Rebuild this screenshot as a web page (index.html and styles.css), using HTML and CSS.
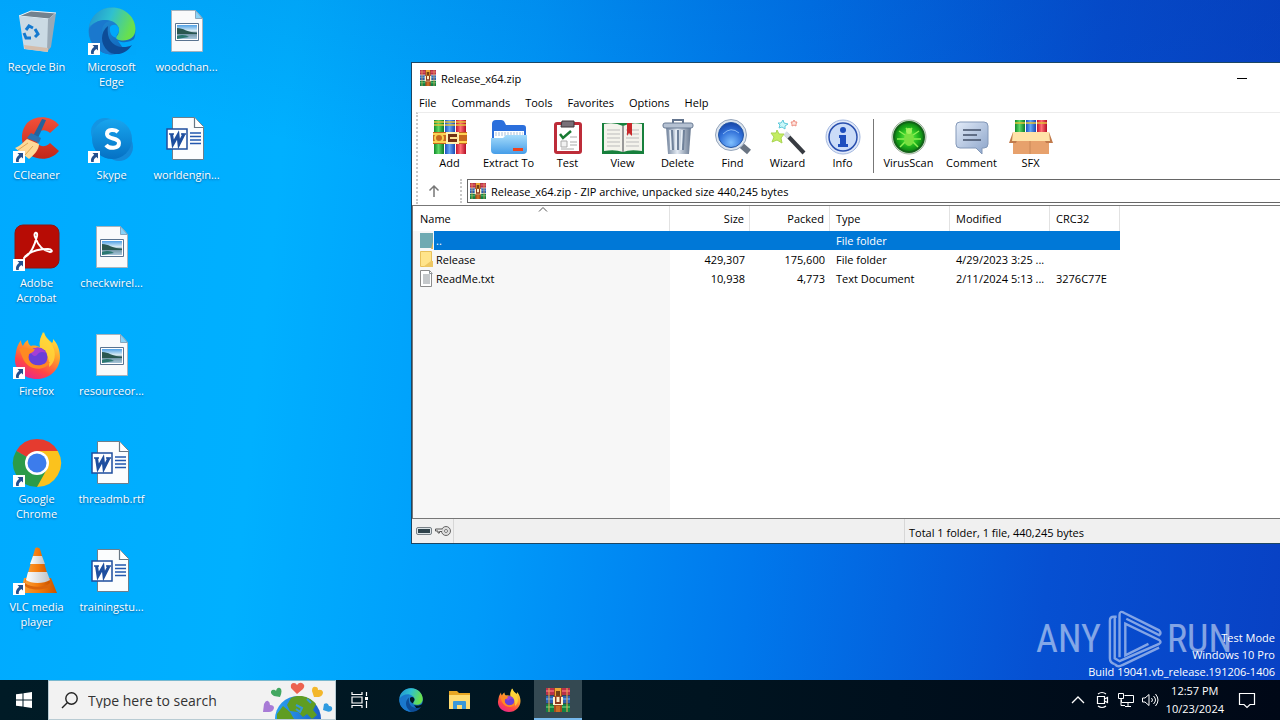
FILE: index.html
```html
<!DOCTYPE html>
<html lang="en">
<head>
<meta charset="utf-8">
<title>Desktop</title>
<link rel="stylesheet" href="styles.css">
</head>
<body>
<svg class="defs" aria-hidden="true">
  <defs>
    <linearGradient id="edgeTop" x1="0" y1="0" x2="1" y2="0.3"><stop offset="0" stop-color="#1f8fd0"/><stop offset=".5" stop-color="#2fc0d0"/><stop offset="1" stop-color="#68e04e"/></linearGradient>
    <linearGradient id="edgeLeft" x1="0" y1="0" x2=".6" y2="1"><stop offset="0" stop-color="#2596dc"/><stop offset="1" stop-color="#1168bd"/></linearGradient>
    <linearGradient id="foxG" x1=".8" y1="0" x2=".3" y2="1"><stop offset="0" stop-color="#fff044"/><stop offset=".4" stop-color="#ffa02c"/><stop offset=".75" stop-color="#ff4646"/><stop offset="1" stop-color="#e8268c"/></linearGradient>
    <linearGradient id="coneG"><stop offset="0" stop-color="#f9a13a"/><stop offset=".5" stop-color="#f57c0c"/><stop offset="1" stop-color="#c95400"/></linearGradient>
    <linearGradient id="whiteG"><stop offset="0" stop-color="#fff"/><stop offset="1" stop-color="#bfc3c6"/></linearGradient>
    <linearGradient id="skyG" x1="0" y1="0" x2="0" y2="1"><stop offset="0" stop-color="#18a5ee"/><stop offset="1" stop-color="#0571c4"/></linearGradient>
    <linearGradient id="redG" x1="0" y1="0" x2="0" y2="1"><stop offset="0" stop-color="#f2503a"/><stop offset="1" stop-color="#c02618"/></linearGradient>
    <linearGradient id="bG"><stop offset="0" stop-color="#1d4fc0"/><stop offset=".45" stop-color="#63a5f5"/><stop offset="1" stop-color="#1a48b0"/></linearGradient>
    <linearGradient id="gG"><stop offset="0" stop-color="#0f8a2a"/><stop offset=".45" stop-color="#5ed868"/><stop offset="1" stop-color="#0b7a25"/></linearGradient>
    <linearGradient id="rG"><stop offset="0" stop-color="#c4122c"/><stop offset=".45" stop-color="#ff6f74"/><stop offset="1" stop-color="#b30d25"/></linearGradient>
    <linearGradient id="foldG" x1="0" y1="0" x2="0" y2="1"><stop offset="0" stop-color="#a5dcfb"/><stop offset="1" stop-color="#459de8"/></linearGradient>
    <linearGradient id="metalG"><stop offset="0" stop-color="#71829b"/><stop offset=".45" stop-color="#e2e9f2"/><stop offset="1" stop-color="#66778f"/></linearGradient>
    <radialGradient id="lensG" cx=".5" cy=".8" r=".8"><stop offset="0" stop-color="#7fc0ff"/><stop offset=".6" stop-color="#2f6fd8"/><stop offset="1" stop-color="#1745a8"/></radialGradient>
    <radialGradient id="virG"><stop offset="0" stop-color="#6bff4a"/><stop offset=".6" stop-color="#22b81d"/><stop offset="1" stop-color="#0a7d12"/></radialGradient>
    <linearGradient id="noteG" x1="0" y1="0" x2="1" y2="1"><stop offset="0" stop-color="#e2ebf8"/><stop offset="1" stop-color="#8aa3c9"/></linearGradient>
    <linearGradient id="photoG" x1="0" y1="0" x2="0" y2="1"><stop offset="0" stop-color="#4fa0e6"/><stop offset=".45" stop-color="#e4f2f6"/><stop offset=".5" stop-color="#5d8291"/><stop offset="1" stop-color="#a8c7dc"/></linearGradient>
    <linearGradient id="earthG"><stop offset="0" stop-color="#2aa2f2"/><stop offset="1" stop-color="#1b5fc9"/></linearGradient>

    <symbol id="shortcut" viewBox="0 0 12 12"><path d="M0 0h12v12H0z" fill="#fff"/><path d="M4.500 2H10v5.500L8.300 5.900C6 7.500 5.600 8.800 5.800 11H3.200C2.500 8.200 3.300 6 6.200 3.800z" fill="#24508e"/></symbol>

    <symbol id="edge" viewBox="0 0 48 48">
      <circle cx="24" cy="24" r="23.500" fill="url(#edgeLeft)"/>
      <path class="edge-cut" d="M30 34c8 3 14 0 19-4v18H40z"/>
      <path d="M1 20C3 8 13 .5 24 .5 38 .5 47.500 11 47.500 22c0 8-6 11.500-12 11.500-5 0-8-1.500-7.500-3.500 2-2 3-4 3-7 0-6-7-10-13-10C9 13 4 17 1 20z" fill="url(#edgeTop)"/>
      <path d="M14 24c0-5 3-9 8-10-9-3-17 2-21 8 0 15 11 25.500 23 25.500C17 43 13 34 14 24z" fill="#1a78cd"/>
      <path d="M20 19c-8 6-8 18 0 25 8 6 18 3 24-6-9 5-27 2-24-19z" fill="#0d4c98"/>
      <path class="edge-cut" d="M22 20c3-4 9-2 9 3 0 4-4 5-2 8-5-1-8-5-7-11z"/>
    </symbol>
    <symbol id="firefox" viewBox="0 0 48 48">
      <path d="M3 21C4 15 6 12 8 9c0 3 1 5 2 6 1-3 3-5 5-6 0 3 1 5 3 6 3-1 6 0 9 1-1-6 1-11 4-15 1 5 5 8 8 11 1-1 1-2 1-4 5 5 7 12 7 18 0 12-10 22-23 22S1 39 2 27z" fill="url(#foxG)"/>
      <path d="M30 1c1 6 6 8 9 13 5 8 3 18-3 22 1-8-3-16-9-20-1-6 1-11 3-15z" fill="#ffd83a" opacity=".8"/>
      <circle cx="25" cy="26" r="9.500" fill="#6a3fd8"/><path d="M17 20c4-5 13-4 16 2-4-2-7-1-9 2-2 2-5 1-7-4z" fill="#a33fd5"/>
      <path d="M6 18c5-3 10 0 16 0-1 3-4 4-6 5-3 5 3 13 12 11 4-1 6-3 9-3-3 7-14 9-21 4C10 31 9 24 6 18z" fill="#ff8a22"/>
    </symbol>
    <symbol id="image-file" viewBox="0 0 48 48">
      <path d="M8.500 3.500h24l7 8v33h-31z" fill="#f9fafb" stroke="#a7b3bd"/><path d="M32.500 3.500v8h7z" fill="#8ad2f6" stroke="#86a7be"/>
      <path d="M12.500 16.500h23v17h-23z" fill="#fff" stroke="#597390"/><path d="M14 18h20v14H14z" fill="url(#photoG)"/><path d="M14 21c7 0 9 4 20 5v1H14z" fill="#2a5750"/><path d="M14 29c6-2 9-1 12 1l-12 2z" fill="#2b7770"/>
    </symbol>
    <symbol id="word-file" viewBox="0 0 48 48">
      <path d="M9.500 2.500h22l9 9v33h-31z" fill="#fbfdfe" stroke="#6d7f8c"/><path d="M31.500 2.500v10h9" fill="#fff" stroke="#687784" stroke-width="1.200"/>
      <path d="M27 18h11M27 21.500h11M27 25h11M27 28.500h11" stroke="#2458ae" stroke-width="1.300"/>
      <path d="M4 14h20v20H4z" fill="#fff" stroke="#1e4e9f" stroke-width="1.500"/><path d="M8.500 19l1.500 10 5-9 1 9 5-10" fill="none" stroke="#1e4e9f" stroke-width="3"/><path d="M6 19h5M18 19h5" stroke="#1e4e9f" stroke-width="1.500"/>
    </symbol>
    <symbol id="winrar" viewBox="0 0 24 24">
      <path d="M0 0h24v7H0z" fill="#b8314c"/><path d="M0 2h24v2H0z" fill="#e25b6c"/><path d="M0 8h24v7H0z" fill="#2d5faf"/><path d="M0 10h24v2H0z" fill="#4e90de"/><path d="M0 16h24v8H0z" fill="#128043"/><path d="M0 18h24v2H0z" fill="#42b264"/>
      <path d="M2 0h2v24H2zM20 0h2v24h-2z" fill="#e3a64d" opacity=".55"/><path d="M8 0h8v24H8z" fill="#a34b21"/><path d="M9 0h6v8H9z" fill="#efa733"/><path d="M10 3h4v5h-4z" fill="#744018"/>
      <path d="M7 9h10v8H7z" fill="#fff0c8"/><path d="M9 9h1.500v5h3V9H15v7H9z" fill="#8b381e"/><path d="M10 18h4v6h-4z" fill="#cc6b22"/>
    </symbol>
    <symbol id="folder-file" viewBox="0 0 14 17"><path d="M.5.500h11v15H.5z" fill="#ffe48b" stroke="#e8c05a"/><path d="M11 10h2v6H3z" fill="#edc763"/></symbol>
  </defs>
</svg>

<main class="desktop">
  <ul class="icons">
    <li class="icon"><svg viewBox="0 0 48 48"><path d="M6 9l12-5 25 2-7 6z" fill="#73828e" stroke="#f0f5f8"/><path d="M6 9l29 3v33l-24-3z" fill="#cbdae4"/><path d="M35 12l8-6-5 34-4 5z" fill="#9aa9b6"/><path d="M11 38l24 3v4l-23-3z" fill="#d4bdac"/><path d="M13 23l3-4 4 2M22 22l3 5-3 3M18 31h-5l-2-5" fill="none" stroke="#1479cf" stroke-width="3"/></svg><span>Recycle Bin</span></li>
    <li class="icon"><svg viewBox="0 0 48 48"><path d="M46 10C38 0 22 0 14 8 6 18 8 32 17 40c9 6 22 5 29-4l-9-8c-5 5-12 4-13-2-3-8 6-15 13-8z" fill="url(#redG)"/><path d="M29 4l4 1-8 18-5-2z" fill="#23639e"/><path d="M18 18l10 5-2 5-12-5z" fill="#2b73b2"/><path d="M2 33c6-2 9-7 12-9l12 5c0 6-5 11-10 15z" fill="#ffd997"/><path d="M5 35l10-7M12 40l8-9" stroke="#e0a756"/></svg><svg class="arrow"><use href="#shortcut"/></svg><span>CCleaner</span></li>
    <li class="icon"><svg viewBox="0 0 48 48"><rect x="2" y="2" width="44" height="43" rx="8" fill="#b70c05" stroke="#8e1410"/><path d="M12 34c6-3 10-13 12-21 1-5-4-4-2 1 3 8 8 14 15 15 3 0 2-3-2-3-8 0-14 1-20 5-4 3-5 6-3 3z" fill="none" stroke="#fff" stroke-width="2"/></svg><svg class="arrow"><use href="#shortcut"/></svg><span>Adobe Acrobat</span></li>
    <li class="icon"><svg><use href="#firefox"/></svg><svg class="arrow"><use href="#shortcut"/></svg><span>Firefox</span></li>
    <li class="icon"><svg viewBox="0 0 48 48"><path d="M24 24 3.200 12a24 24 0 0 1 41.600 0z" fill="#e53b2f"/><path d="M24 24V12h20.800A24 24 0 0 1 24 48z" fill="#fbc21d"/><path d="M24 24l10 6-10 18A24 24 0 0 1 3.200 12z" fill="#2b9b49"/><circle cx="24" cy="24" r="12" fill="#fff"/><circle cx="24" cy="24" r="9.500" fill="#3c7cec"/></svg><svg class="arrow"><use href="#shortcut"/></svg><span>Google Chrome</span></li>
    <li class="icon"><svg viewBox="0 0 48 48"><path d="M11 31h27l6 15H8z" fill="url(#coneG)"/><path d="M11 38c5 6 22 6 27 0l-2-7H13z" fill="#db650b"/><path d="M22 2c0-2 4-2 5 0l10 34c-6 5-19 5-25 0z" fill="url(#coneG)"/><path d="M20 9h9l3 8H17z" fill="url(#whiteG)"/><path d="M15 25h19l3 8c-6 4-19 4-24 0z" fill="url(#whiteG)"/></svg><svg class="arrow"><use href="#shortcut"/></svg><span>VLC media player</span></li>
    <li class="icon"><svg><use href="#edge"/></svg><svg class="arrow"><use href="#shortcut"/></svg><span>Microsoft Edge</span></li>
    <li class="icon"><svg viewBox="0 0 48 48"><circle cx="17" cy="17" r="14" fill="#1495e3"/><circle cx="31" cy="32" r="14" fill="#1489d9"/><circle cx="24" cy="24" r="20" fill="url(#skyG)"/><path d="M30 17c-3-3-11-3-11 2 0 6 12 3 12 9 0 6-10 6-13 2" fill="none" stroke="#fff" stroke-width="4"/></svg><svg class="arrow"><use href="#shortcut"/></svg><span>Skype</span></li>
    <li class="icon"><svg><use href="#image-file"/></svg><span>checkwirel...</span></li>
    <li class="icon"><svg><use href="#image-file"/></svg><span>resourceor...</span></li>
    <li class="icon"><svg><use href="#word-file"/></svg><span>threadmb.rtf</span></li>
    <li class="icon"><svg><use href="#word-file"/></svg><span>trainingstu...</span></li>
    <li class="icon"><svg><use href="#image-file"/></svg><span>woodchan...</span></li>
    <li class="icon"><svg><use href="#word-file"/></svg><span>worldengin...</span></li>
  </ul>

  <div class="brand"><span>ANY</span>
    <svg viewBox="0 0 56 62"><g fill="none" stroke="#fff" stroke-width="2.500"><path d="M10 8H7Q3 8 3 12v39q0 5 5 6"/><path d="M8 8v43l5 3 41-18q3-2 0-4L19 15v33l24-12"/><path d="M8 57q3 4 8 1l38-18M13 50V6q0-5 5-2l36 18q3 3 0 5L20 10"/></g></svg>
    <span>RUN</span></div>
  <div class="build"><p>Test Mode</p><p>Windows 10 Pro</p><p>Build 19041.vb_release.191206-1406</p></div>

  <section class="window">
    <header class="titlebar"><svg><use href="#winrar"/></svg><h1>Release_x64.zip</h1><button class="minimize" aria-label="Minimize"></button></header>
    <nav class="menu"><button>File</button><button>Commands</button><button>Tools</button><button>Favorites</button><button>Options</button><button>Help</button></nav>
    <div class="bars">
      <div class="toolbar">
        <button><svg viewBox="0 0 36 36"><path d="M2 1h10v34H2z" fill="url(#gG)"/><path d="M13 1h10v34H13z" fill="url(#bG)"/><path d="M24 1h10v34H24z" fill="url(#rG)"/><path d="M2 3h10M13 3h10M24 3h10M2 6h10M13 6h10M24 6h10" stroke="#e3c13a" stroke-width="1.500"/><path d="M1 13h34v12H1z" fill="#c8691d"/><path d="M1 14h34v2H1zM1 22h34v2H1z" fill="#ffd353"/><circle cx="7" cy="19" r="4" fill="none" stroke="#f6d252" stroke-width="2"/><path d="M15 14h11v10H15z" fill="#743214" stroke="#fff0b0" stroke-width="2"/><path d="M18 19h8" stroke="#ffe495" stroke-width="2"/></svg>Add</button>
        <button class="medium"><svg viewBox="0 0 36 36"><path d="M1 5q0-4 4-4h5q3 0 4 3l1 2h17q3 0 3 3v18H1z" fill="#2b6fdc"/><path d="M3 12h30v12H3z" fill="#fff"/><path d="M4 14h28M4 16h28" stroke="#a8bfda" stroke-dasharray="2 1"/><path d="M0 19h12l3-3h21v15q0 4-4 4H4q-4 0-4-4z" fill="url(#foldG)"/><path d="M22 29h10v3H22z" fill="#ee421e"/></svg>Extract To</button>
        <button><svg viewBox="0 0 36 36"><rect x="4" y="3" width="28" height="32" rx="3" fill="#bd2c39"/><path d="M7 6h22v26H7z" fill="#fff"/><path d="M12 2h12v6H11z" fill="#787078" stroke="#3c353b"/><path d="M10 15l3 4 8-7" fill="none" stroke="#187a32" stroke-width="2.500"/><path d="M11 22h6v6h-6z" fill="#f2f2f2" stroke="#aaa"/><path d="M20 18h7M20 23h7M20 26h7M11 30h13" stroke="#aaa"/></svg>Test</button>
        <button><svg class="wide-icon" viewBox="0 0 44 36"><path d="M1 4h42v31H1z" fill="#17803c"/><path d="M3 5q11-2 19 2 8-4 19-2v27q-12-2-19 1-8-3-19-1z" fill="#f4f3ec"/><path d="M22 7v26" stroke="#999" stroke-width="2"/><path d="M6 11h13M6 15h13M6 19h13M6 23h13M6 27h13M25 11h13M25 15h13M25 19h13M25 23h13M25 27h13" stroke="#bbb"/><path d="M26 4h5v13l-3-3-2 3z" fill="#c8292b"/></svg>View</button>
        <button><svg viewBox="0 0 36 36"><path d="M13 4V1h10v3" fill="none" stroke="#64758e" stroke-width="2"/><path d="M6 8h25l-2 27H8z" fill="url(#metalG)"/><path d="M12 11l1 20M18 11v20M24 11l-1 20" stroke="#6f819a" stroke-width="2"/><path d="M10 11l1 20M16 11v20M22 11l-1 20" stroke="#e9f0f7" stroke-width="1.500"/><rect x="3" y="4" width="30" height="5" rx="2" fill="#b5c1d2" stroke="#687a93"/></svg>Delete</button>
        <button><svg viewBox="0 0 36 36"><path d="M26 26l8 7" stroke="#6a7482" stroke-width="6"/><circle cx="16" cy="16" r="15.500" fill="#dce5ef" stroke="#97a6bb"/><circle cx="16" cy="16" r="12.500" fill="url(#lensG)" stroke="#2255a5"/><path d="M8 15q8-8 16-1" fill="none" stroke="#8bbaf5"/></svg>Find</button>
        <button><svg viewBox="0 0 36 36"><path d="M16 15l18 19" stroke="#373b41" stroke-width="4"/><path d="M15 14l4 4" stroke="#d5dce5" stroke-width="5"/><path d="M7 11l2 4 5 0-3 4 1 5-5-3-5 2 2-5-3-4 5 0z" fill="#c4ed62" stroke="#a9d553"/><path d="M13 1l1 3 4 1-3 2v3l-3-2-3 1 1-3-2-2h3z" fill="#caf8fa" stroke="#5ec9da"/><path d="M24 1l1 2h2l-1 2v2l-2-1-2 1v-2l-1-2h2z" fill="#ffe5df" stroke="#ed8f82"/></svg>Wizard</button>
        <button><svg viewBox="0 0 36 36"><circle cx="18" cy="18" r="17" fill="#e2eafa" stroke="#a2b7df"/><circle cx="18" cy="18" r="14" fill="#cbdcf8" stroke="#294fae" stroke-width="1.500"/><circle cx="18" cy="11" r="3" fill="#1f4fbe"/><path d="M14 16h7v9h2v3H13v-3h2v-6h-1z" fill="#1f4fbe"/></svg>Info</button>
        <i class="separator"></i>
        <button class="medium"><svg viewBox="0 0 36 36"><circle cx="18" cy="18" r="17" fill="#e5eee4" stroke="#9eaf9c"/><circle cx="18" cy="18" r="15" fill="url(#virG)" stroke="#146319" stroke-width="2"/><path d="M15 9l3 4 3-4M8 12l6 4M28 12l-6 4M6 20h8M30 20h-8M9 28l5-5M27 28l-5-5" fill="none" stroke="#8cf052" stroke-width="1.500"/><ellipse cx="18" cy="20" rx="5" ry="7" fill="#78e040"/><circle cx="18" cy="12" r="3" fill="#a0f25c"/></svg>VirusScan</button>
        <button class="medium"><svg viewBox="0 0 36 36"><path d="M6 3h24q4 0 4 4v18q0 4-4 4h-2v6l-6-6H6q-4 0-4-4V7q0-4 4-4z" fill="url(#noteG)" stroke="#8398b8"/><path d="M9 11h18M9 16h14M9 21h18" stroke="#435068" stroke-width="1.500"/></svg>Comment</button>
        <button><svg class="wide-icon" viewBox="0 0 44 36"><path d="M6 1h10v16H6z" fill="url(#gG)"/><path d="M17 1h10v16H17z" fill="url(#bG)"/><path d="M28 1h10v16H28z" fill="url(#rG)"/><path d="M6 4h10M17 4h10M28 4h10" stroke="#e3c13a" stroke-width="1.500"/><path d="M4 14h36v21H4z" fill="#e7a16c"/><path d="M4 13l-4 11h7l3-8M40 13l4 11h-7l-4-8" fill="#c17b4c"/><path d="M4 13h36l1 9H3z" fill="#ffe2a8"/><path d="M21 22v13" stroke="#ca8756"/></svg>SFX</button>
      </div>
      <div class="addressbar"><button class="up" aria-label="Up one level"><svg viewBox="0 0 12 12"><path d="M6 12V1M1.500 5.500 6 1l4.500 4.500" fill="none" stroke="#777" stroke-width="1.500"/></svg></button><label class="address"><svg><use href="#winrar"/></svg><input aria-label="Archive path" readonly value="Release_x64.zip - ZIP archive, unpacked size 440,245 bytes"></label></div>
    </div>
    <div class="list">
      <table>
        <colgroup><col class="c-name"><col class="c-num"><col class="c-num"><col class="c-type"><col class="c-date"><col class="c-crc"></colgroup>
        <thead><tr><th>Name<svg class="sort" viewBox="0 0 8 5"><path d="M0 4.500 4 .5l4 4" fill="none" stroke="#555"/></svg></th><th class="num">Size</th><th class="num">Packed</th><th>Type</th><th>Modified</th><th>CRC32</th></tr></thead>
        <tbody>
          <tr class="selected"><td><span class="file"><svg viewBox="0 0 14 17"><path d="M0 1h13v15H0z" fill="#6faab2"/><path d="M13 10v7h-2z" fill="#deb65c"/></svg><b>..</b></span></td><td></td><td></td><td>File folder</td><td></td><td></td></tr>
          <tr><td><span class="file"><svg><use href="#folder-file"/></svg><b>Release</b></span></td><td class="num">429,307</td><td class="num">175,600</td><td>File folder</td><td>4/29/2023 3:25 ...</td><td></td></tr>
          <tr><td><span class="file"><svg viewBox="0 0 14 17"><path d="M.5.500h9l2 2v14H.5z" fill="#fff" stroke="#8b8b8b"/><path d="M9.500.500v3h3M3 5h7M3 7h7M3 9h7M3 11h7M3 13h7" fill="none" stroke="#8b9297"/></svg><b>ReadMe.txt</b></span></td><td class="num">10,938</td><td class="num">4,773</td><td>Text Document</td><td>2/11/2024 5:13 ...</td><td>3276C77E</td></tr>
        </tbody>
      </table>
    </div>
    <footer class="status"><div class="status-icons"><svg viewBox="0 0 16 8"><rect x=".5" y=".5" width="15" height="7" rx="1.500" fill="#dce3e6" stroke="#778087"/><path d="M2 2h12v4H2z" fill="#30434c"/></svg><svg viewBox="0 0 16 10"><circle cx="11" cy="5" r="4.500" fill="#ddd" stroke="#666"/><circle cx="11" cy="5" r="1.500" fill="#fff" stroke="#777"/><path d="M7 3H.5v2H3v2h1.500V5.500H7" fill="#eee" stroke="#555"/></svg></div><div class="status-main"></div><div class="status-total">Total 1 folder, 1 file, 440,245 bytes</div></footer>
  </section>
</main>

<footer class="taskbar">
  <button class="start" aria-label="Start"><svg viewBox="0 0 16 16"><path d="M0 2.300 6.500 1.400v6.100H0zM7.500 1.200 16 0v7.500H7.500zM0 8.500h6.500v6.100L0 13.700zM7.500 8.500H16V16l-8.500-1.200z" fill="#fff"/></svg></button>
  <label class="search"><svg class="glass" viewBox="0 0 17 17"><circle cx="10.500" cy="6.500" r="5.700" fill="none" stroke="#222" stroke-width="1.400"/><path d="M6.500 10.500 1 16" stroke="#222" stroke-width="1.500"/></svg><input type="search" aria-label="Search" placeholder="Type here to search">
    <svg class="doodle" viewBox="0 0 72 38"><circle cx="35" cy="38" r="23" fill="url(#earthG)"/><path d="M28 17c8-4 18-2 25 6l-3 6 4 5-5 4-5-5-4 3-5-5-8-1-3-6zM14 33l6-8 7 6 4 7H14z" fill="#5f9d22"/><path d="M33 24l6 3-2 4-4-3M44 18l4 4" stroke="#3497d8" stroke-width="2" fill="none"/><path d="M34 13l-6-6q-1-5 3-5 2 0 3 2 2-3 5-2 4 2 1 6z" fill="#ed624f"/><path d="M17 16l-6-1q-5-3-2-6 3-1 4 1 1-4 4-3 3 2 0 9z" fill="#43a861"/><path d="M51 16l-2-6q0-5 4-4 2 0 2 3 4-1 5 2 0 4-4 5z" fill="#f3b72b"/><path d="M0 31l1-8q2-4 4-3 2 1 2 4 4 0 4 3-1 4-5 4z" fill="#a87bd6"/><path d="M60 29l1-6q4-2 5 2 4 0 3 4-2 3-6 1z" fill="#2f9be0"/></svg></label>
  <button class="task first" aria-label="Task view"><svg class="taskview" viewBox="0 0 18 16"><path d="M1 0v2.500h10V0M1 16v-2.500h10V16M1 5h10v6H1zM15.500 0v4M15.500 9v7" fill="none" stroke="#fff" stroke-width="1.200"/><path d="M14 5h3v3h-3z" fill="#fff"/></svg></button>
  <button class="task" aria-label="Microsoft Edge"><svg><use href="#edge"/></svg></button>
  <button class="task" aria-label="File Explorer"><svg viewBox="0 0 24 24"><path d="M1 3h8l2 2h11v16H1z" fill="#e8a723"/><path d="M1 7h21v14H1z" fill="#ffdc72"/><path d="M5 21v-7q0-1 1-1h11q1 0 1 1v7h-4v-4H9v4z" fill="#3a98d8"/></svg></button>
  <button class="task" aria-label="Firefox"><svg><use href="#firefox"/></svg></button>
  <button class="task active" aria-label="WinRAR"><svg><use href="#winrar"/></svg></button>
  <div class="tray">
    <svg viewBox="0 0 16 16"><path d="M2 11l6-6 6 6" fill="none" stroke="#fff" stroke-width="1.300"/></svg>
    <svg viewBox="0 0 16 16"><path d="M3.500 4.500h7v7h-7zM10.500 7l3-1.500v5l-3-1.500M4 2Q8-1 12 2M4 14q4 3 8 0" fill="none" stroke="#fff" stroke-width="1.200"/></svg>
    <svg viewBox="0 0 16 16"><path d="M6.500 3.500h9v7h-12v-3M10 10.500v4M7 14.500h6M.5 1.500h5v5h-5zM3 6.500v7h4" fill="none" stroke="#fff"/></svg>
    <svg viewBox="0 0 16 16"><path d="M.5 6h2.500l4-3.500v11L3 10H.5zM9.500 6q2 2 0 4M11.500 4q4 4 0 8M13.500 2q5 6 0 12" fill="none" stroke="#fff"/></svg>
    <time>12:57 PM<br>10/23/2024</time>
    <svg viewBox="0 0 16 16"><path d="M.5 1.500h15v11H11l-3 3-3-3H.5z" fill="none" stroke="#fff" stroke-width="1.200"/></svg>
  </div>
</footer>
</body>
</html>
```
FILE: styles.css
```css
* { box-sizing: border-box; }
body { margin: 0; height: 100vh; display: flex; flex-direction: column; overflow: hidden; font: 11px/15px "Open Sans", "Noto Sans", sans-serif; color: #000; }
button, input { font: inherit; color: inherit; background: none; border: 0; padding: 0; margin: 0; outline: 0; }
svg { display: block; flex: none; overflow: visible; }
.defs { position: absolute; width: 0; height: 0; }
.edge-cut { fill: var(--behind); }

.desktop { --behind: #00a8fb; position: relative; flex: 1; overflow: hidden; background: linear-gradient(195deg, rgba(0, 50, 160, .25), transparent 40%), linear-gradient(96deg, #00aaff 0%, #00b0ff 22%, #009bfa 40%, #0078ec 60%, #0650d2 82%, #0841c4 100%); }
.icons { list-style: none; margin: 0; padding: 7px 0 0; display: grid; grid-auto-flow: column; grid-template-rows: repeat(6, 108px); grid-auto-columns: 75px; width: max-content; }
.icon { position: relative; display: flex; flex-direction: column; align-items: center; gap: 4px; padding: 0 3px 0 1px; color: #fff; text-align: center; text-shadow: 0 1px 2px rgba(0, 40, 90, .6); }
.icon > svg { width: 48px; height: 48px; }
.icon > .arrow { position: absolute; left: 13px; top: 36px; width: 12px; height: 12px; }

.brand { position: absolute; right: 48px; bottom: 11px; display: flex; align-items: center; gap: 6px; color: #fff; opacity: .5; font: 38px/60px "Roboto Condensed", "Liberation Sans Narrow", "DejaVu Sans Condensed", sans-serif; }
.brand svg { width: 54px; height: 60px; }
.build { position: absolute; right: 5px; bottom: 0; color: #fff; text-align: right; line-height: 17px; }
.build p { margin: 0; }

.window { position: absolute; left: 411px; right: 0; top: 62px; bottom: 136px; display: flex; flex-direction: column; background: #fff; border: 1px solid #1c4664; border-right: 0; }
.titlebar { display: flex; align-items: center; gap: 5px; height: 30px; padding: 0 32px 0 8px; }
.titlebar svg, .address svg { width: 16px; height: 16px; }
.titlebar h1 { flex: 1; margin: 0; font: inherit; }
.minimize { width: 12px; height: 12px; background: linear-gradient(#000, #000) center / 10px 1px no-repeat; }
.menu { display: flex; gap: 15px; height: 19px; padding: 0 7px; }
.bars { height: 92px; border-top: 1px solid #ececec; margin-left: 4px; border-left: 2px dotted #c8c8c8; }
.toolbar { display: flex; height: 66px; padding: 6px 0 0 4px; }
.toolbar button { display: flex; flex-direction: column; align-items: center; width: 55px; white-space: nowrap; }
.toolbar .medium { width: 63px; }
.toolbar svg { width: 36px; height: 36px; }
.toolbar .wide-icon { width: 44px; }
.separator { width: 1px; height: 54px; margin: 0 3px; background: #777; }
.addressbar { display: flex; height: 24px; }
.up { width: 44px; padding-left: 10px; border-right: 2px dotted #c8c8c8; }
.up svg { width: 12px; height: 12px; }
.address { flex: 1; display: flex; align-items: center; gap: 5px; margin-left: 5px; padding-left: 2px; border: 1px solid #666; border-right: 0; }
.address input { flex: 1; }
.list { flex: 1; margin-top: 1px; border-top: 1px solid #777; border-left: 1px solid #777; border-bottom: 1px solid #777; background: linear-gradient(#f7f7f7, #f7f7f7) 0 0 / 257px 100% no-repeat; }
table { width: 707px; table-layout: fixed; border-collapse: separate; border-spacing: 0; }
.c-name { width: 257px; }
.c-num { width: 80px; }
.c-type { width: 120px; }
.c-date { width: 100px; }
.c-crc { width: 70px; }
th { position: relative; height: 25px; font-weight: normal; text-align: left; background: #fff; border-right: 1px solid #e2e2e2; }
th, td { padding: 0 6px; white-space: nowrap; }
td { height: 19px; }
th:first-child, td:first-child { padding-left: 7px; }
.num { text-align: right; padding-right: 5px; }
.sort { position: absolute; left: 126px; top: 1px; width: 8px; height: 5px; }
.file { display: flex; align-items: center; }
.file svg { width: 14px; height: 17px; }
.file b { padding-left: 2px; font-weight: normal; }
.selected td { background: #0078d7; color: #fff; }
.selected td:first-child { background: linear-gradient(90deg, #f7f7f7 21px, #0078d7 21px); }
.status { display: flex; height: 24px; background: #f0f0f0; line-height: 27px; }
.status-icons { display: flex; align-items: center; gap: 3px; width: 42px; padding-left: 4px; border-right: 1px solid #d7d7d7; }
.status-icons svg { width: 16px; height: 10px; }
.status-main { flex: 1; }
.status-total { flex: none; width: 376px; padding-left: 4px; border-left: 1px solid #d7d7d7; }

.taskbar { --behind: #001722; display: flex; flex: none; height: 40px; background: linear-gradient(90deg, #001b26, #001420 55%, #000817); color: #fff; }
.start { display: grid; place-items: center; width: 48px; }
.start svg { width: 16px; height: 16px; }
.search { display: flex; align-items: center; width: 288px; padding-left: 12px; border: 1px solid #b8cbd3; border-top-color: #78b8cf; background: #f2f2f2; color: #222; }
.glass { width: 17px; height: 17px; }
.search input { flex: 1; min-width: 0; padding-left: 10px; font-size: 14px; }
.search input::placeholder { color: #333; opacity: 1; }
.doodle { width: 72px; height: 38px; overflow: hidden; }
.task { display: grid; place-items: center; width: 48px; margin-left: 1px; }
.task svg { width: 24px; height: 24px; }
.task.first { width: 50px; margin-left: 0; padding-right: 2px; }
.task .taskview { width: 18px; height: 16px; }
.task.active { background: #344952; border-bottom: 2px solid #76b9ed; padding-top: 2px; }
.tray { display: flex; align-items: center; gap: 8px; margin-left: auto; padding-right: 25px; }
.tray svg { width: 16px; height: 16px; }
.tray time { text-align: center; line-height: 18px; margin-right: 7px; }
```
